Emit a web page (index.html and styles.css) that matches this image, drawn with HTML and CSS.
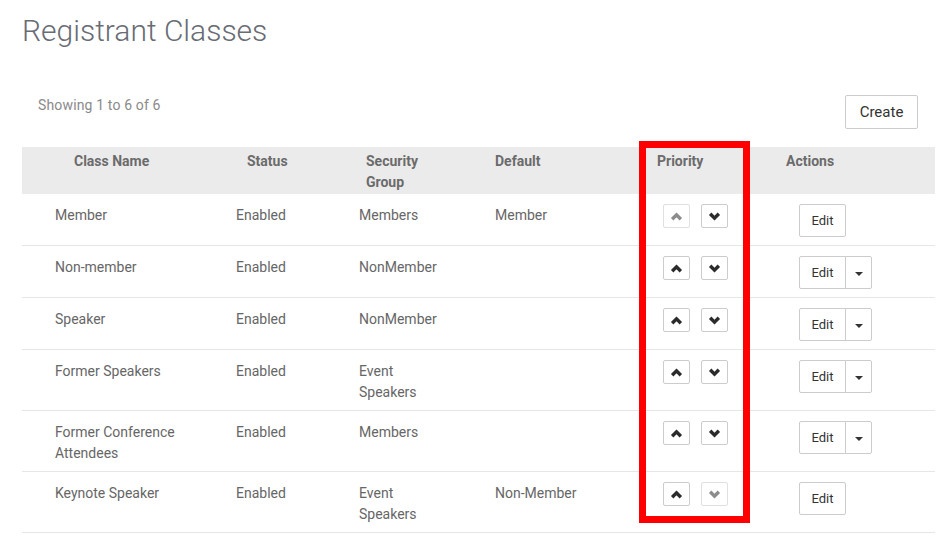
FILE: index.html
```html
<!DOCTYPE html>
<html lang="en">
  <head>
    <meta charset="UTF-8" />
    <meta name="viewport" content="width=device-width, initial-scale=1.0" />
    <title>Registrant Classes</title>
    <link rel="stylesheet" href="styles.css">
  </head>
  <body>
    <div class="page">
      <h1 class="heading">Registrant Classes</h1>

      <div class="toolbar">
        <div class="showing">Showing 1 to 6 of 6</div>
        <button class="btn CreateButton">Create</button>
      </div>

      <table class="classes">
        <colgroup>
          <col class="c-name" />
          <col class="c-status" />
          <col class="c-group" />
          <col class="c-default" />
          <col class="c-priority" />
          <col class="c-actions" />
        </colgroup>
        <thead>
          <tr>
            <th class="name">Class Name</th>
            <th class="status">Status</th>
            <th class="group">Security Group</th>
            <th class="default">Default</th>
            <th class="priority">Priority</th>
            <th class="actions">Actions</th>
          </tr>
        </thead>
        <tbody>
          <tr>
            <td class="name">Member</td>
            <td class="status">Enabled</td>
            <td class="group">Members</td>
            <td class="default">Member</td>
            <td class="priority">
              <button class="move disabled"><svg viewBox="0 0 12 8"><polyline points="2,6.5 6,2.5 10,6.5" /></svg></button>
              <button class="move"><svg viewBox="0 0 12 8"><polyline points="2,1.5 6,5.5 10,1.5" /></svg></button>
            </td>
            <td class="actions"><button class="btn EditButton">Edit</button></td>
          </tr>
          <tr>
            <td class="name">Non-member</td>
            <td class="status">Enabled</td>
            <td class="group">NonMember</td>
            <td class="default"></td>
            <td class="priority">
              <button class="move"><svg viewBox="0 0 12 8"><polyline points="2,6.5 6,2.5 10,6.5" /></svg></button>
              <button class="move"><svg viewBox="0 0 12 8"><polyline points="2,1.5 6,5.5 10,1.5" /></svg></button>
            </td>
            <td class="actions">
              <div class="split"><button class="btn EditButton">Edit</button><button class="btn caret"><span></span></button></div>
            </td>
          </tr>
          <tr>
            <td class="name">Speaker</td>
            <td class="status">Enabled</td>
            <td class="group">NonMember</td>
            <td class="default"></td>
            <td class="priority">
              <button class="move"><svg viewBox="0 0 12 8"><polyline points="2,6.5 6,2.5 10,6.5" /></svg></button>
              <button class="move"><svg viewBox="0 0 12 8"><polyline points="2,1.5 6,5.5 10,1.5" /></svg></button>
            </td>
            <td class="actions">
              <div class="split"><button class="btn EditButton">Edit</button><button class="btn caret"><span></span></button></div>
            </td>
          </tr>
          <tr>
            <td class="name">Former Speakers</td>
            <td class="status">Enabled</td>
            <td class="group">Event Speakers</td>
            <td class="default"></td>
            <td class="priority">
              <button class="move"><svg viewBox="0 0 12 8"><polyline points="2,6.5 6,2.5 10,6.5" /></svg></button>
              <button class="move"><svg viewBox="0 0 12 8"><polyline points="2,1.5 6,5.5 10,1.5" /></svg></button>
            </td>
            <td class="actions">
              <div class="split"><button class="btn EditButton">Edit</button><button class="btn caret"><span></span></button></div>
            </td>
          </tr>
          <tr>
            <td class="name">Former Conference Attendees</td>
            <td class="status">Enabled</td>
            <td class="group">Members</td>
            <td class="default"></td>
            <td class="priority">
              <button class="move"><svg viewBox="0 0 12 8"><polyline points="2,6.5 6,2.5 10,6.5" /></svg></button>
              <button class="move"><svg viewBox="0 0 12 8"><polyline points="2,1.5 6,5.5 10,1.5" /></svg></button>
            </td>
            <td class="actions">
              <div class="split"><button class="btn EditButton">Edit</button><button class="btn caret"><span></span></button></div>
            </td>
          </tr>
          <tr>
            <td class="name">Keynote Speaker</td>
            <td class="status">Enabled</td>
            <td class="group">Event Speakers</td>
            <td class="default">Non-Member</td>
            <td class="priority">
              <button class="move"><svg viewBox="0 0 12 8"><polyline points="2,6.5 6,2.5 10,6.5" /></svg></button>
              <button class="move disabled"><svg viewBox="0 0 12 8"><polyline points="2,1.5 6,5.5 10,1.5" /></svg></button>
            </td>
            <td class="actions"><button class="btn EditButton">Edit</button></td>
          </tr>
        </tbody>
      </table>

      <div class="highlight"></div>
    </div>
  </body>
</html>
```

FILE: styles.css
```css
body {
  margin: 0;
  background-color: white;
  font-family: Roboto, "Liberation Sans", sans-serif;
  color: #666;
}
.page {
  position: relative;
  width: 947px;
  height: 545px;
  overflow: hidden;
}
.heading {
  margin: 11px 0 0 22px;
  font-size: 30px;
  font-weight: 300;
  line-height: 40px;
  color: #686c74;
}
.toolbar {
  display: flex;
  justify-content: space-between;
  align-items: flex-start;
  margin: 44px 29px 0 38px;
}
.showing {
  padding-top: 2px;
  font-size: 14px;
  letter-spacing: 0.15px;
  color: #8a8a8a;
}
.btn {
  background-color: white;
  border: 1px solid #ccc;
  border-radius: 2px;
  color: #333;
  font-family: Roboto, "Liberation Sans", sans-serif;
  cursor: pointer;
}
.CreateButton {
  width: 73px;
  height: 34px;
  font-size: 15px;
}
.classes {
  margin: 18px 0 0 22px;
  width: 913px;
  table-layout: fixed;
  border-collapse: collapse;
  font-size: 14px;
  line-height: 21px;
}
.c-name { width: 206px; }
.c-status { width: 123px; }
.c-group { width: 136px; }
.c-default { width: 154px; }
.c-priority { width: 134px; }
.c-actions { width: 160px; }

.classes th {
  background-color: #ebebeb;
  text-align: left;
  vertical-align: top;
  font-weight: bold;
  color: #6b6b6b;
  padding: 4px 8px 1px 8px;
}
.classes td {
  text-align: left;
  vertical-align: top;
  padding: 10px 8px 8px 8px;
  border-bottom: 1px solid #e6e6e6;
}
th.name { padding-left: 52px; }
th.status { padding-left: 19px; }
th.group { padding-left: 15px; padding-right: 33px; }
th.priority { padding-left: 16px; }
th.actions { padding-left: 11px; }

td.name, td.status, td.group, td.default { padding-top: 11px; padding-bottom: 7px; }
td.name { padding-left: 33px; padding-right: 20px; }
td.group { padding-right: 40px; }
td.priority { padding-left: 22px; }
td.actions { padding-left: 24px; }

.move {
  width: 27px;
  height: 24px;
  margin-right: 8px;
  padding: 0;
  background-color: white;
  border: 1px solid #ccc;
  border-radius: 2px;
  vertical-align: top;
}
.move svg {
  display: block;
  width: 13px;
  height: 9px;
  margin: 0 auto;
}
.move polyline {
  fill: none;
  stroke: #2b2b2b;
  stroke-width: 3.2;
}
.move.disabled {
  border-color: #e0e0e0;
}
.move.disabled polyline {
  stroke: #8c8c8c;
}
.EditButton {
  width: 47px;
  height: 33px;
  font-size: 13px;
  vertical-align: top;
}
.split {
  display: flex;
}
.split .EditButton {
  border-radius: 2px 0 0 2px;
}
.caret {
  width: 27px;
  height: 33px;
  margin-left: -1px;
  padding: 0;
  border-radius: 0 2px 2px 0;
}
.caret span {
  display: block;
  margin: 2px auto 0 auto;
  width: 0;
  height: 0;
  border-left: 4px solid transparent;
  border-right: 4px solid transparent;
  border-top: 4px solid #333;
}
.highlight {
  position: absolute;
  left: 639px;
  top: 141px;
  width: 97px;
  height: 368px;
  border: 7px solid #ff0000;
}
```
